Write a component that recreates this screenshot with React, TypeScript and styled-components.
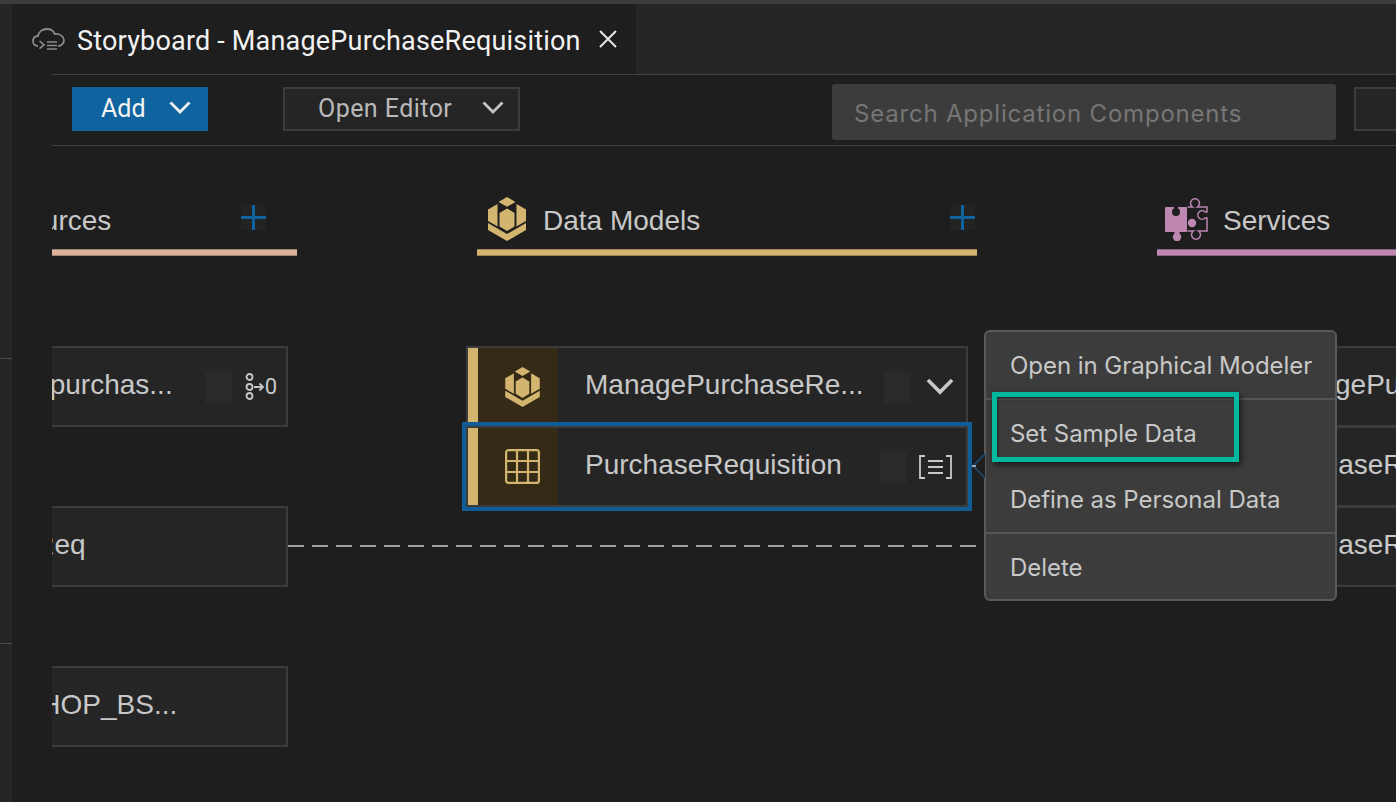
import React from 'react';
import styled, {createGlobalStyle} from 'styled-components';

const colors = {
  gold: '#d3b570',
  peach: '#dcb29b',
  mauve: '#bd87b1',
  blue: '#0f639e',
  line: '#3c3c3c',
  panel: '#252526',
  canvas: '#1e1e1e',
  text: '#c8c8c8',
};

const GlobalStyle = createGlobalStyle`
  html, body {
    margin: 0;
    height: 100%;
    background: ${colors.canvas};
    overflow: hidden;
  }
  * {
    box-sizing: border-box;
  }
`;

const Page = styled.div`
  width: 1396px;
  height: 802px;
  display: flex;
  flex-direction: column;
  overflow: hidden;
  font-family: 'Liberation Sans', Arial, sans-serif;
`;

const TopEdge = styled.div`
  height: 4px;
  flex-shrink: 0;
  background: #3c3c3c;
`;

const Body = styled.div`
  flex: 1;
  display: flex;
  min-height: 0;
`;

const Rail = styled.div`
  width: 12px;
  flex-shrink: 0;
  padding-top: 354px;
  background: ${colors.panel};
`;

const RailTick = styled.div`
  height: 1px;
  margin-bottom: 284px;
  background: #4a4a4a;
`;

const Main = styled.div`
  flex: 1;
  min-width: 0;
  display: flex;
  flex-direction: column;
`;

const TabStrip = styled.div`
  height: 70px;
  flex-shrink: 0;
  display: flex;
  background: ${colors.panel};
`;

const Tab = styled.div`
  width: 624px;
  display: flex;
  align-items: center;
  padding: 0 18px 0 20px;
  background: ${colors.canvas};
  color: #f2f2f2;
`;

const TabIcon = styled.div`
  display: flex;
  margin-top: 3px;
`;

const TabTitle = styled.span`
  flex: 1;
  margin: 3px 0 0 12px;
  font-family: Roboto, sans-serif;
  font-size: 27px;
  letter-spacing: 0.19px;
  white-space: nowrap;
`;

const Content = styled.div`
  flex: 1;
  min-height: 0;
  margin-left: 40px;
  display: flex;
  flex-direction: column;
`;

const Toolbar = styled.div`
  height: 72px;
  flex-shrink: 0;
  display: flex;
  align-items: flex-start;
  padding: 12px 0 0 20px;
  border-top: 1px solid #414141;
  border-bottom: 1px solid #414141;
  overflow: hidden;
`;

const AddButton = styled.div`
  width: 136px;
  height: 44px;
  flex-shrink: 0;
  display: flex;
  align-items: center;
  justify-content: space-between;
  padding: 0 17px 2px 29px;
  background: ${colors.blue};
  color: #f4f4f4;
  font-family: Roboto, sans-serif;
  font-size: 25px;
`;

const EditorSelect = styled.div`
  width: 237px;
  height: 44px;
  flex-shrink: 0;
  margin-left: 75px;
  display: flex;
  align-items: center;
  justify-content: space-between;
  padding: 0 14px 2px 33px;
  border: 2px solid ${colors.line};
  background: ${colors.panel};
  color: #b9b9b9;
  font-family: Roboto, sans-serif;
  font-size: 25px;
  letter-spacing: 0.45px;
`;

const SearchBox = styled.div`
  width: 504px;
  height: 56px;
  flex-shrink: 0;
  margin: -3px 0 0 312px;
  display: flex;
  align-items: center;
  padding: 2px 0 0 22px;
  border-radius: 3px;
  background: #3c3c3c;
  color: #767676;
  font-family: Inter, sans-serif;
  font-size: 24px;
  letter-spacing: 0.8px;
  white-space: nowrap;
`;

const CutOffBox = styled.div`
  width: 100px;
  height: 44px;
  flex-shrink: 0;
  margin-left: 18px;
  border: 2px solid ${colors.line};
  background: ${colors.panel};
`;

const Canvas = styled.div`
  position: relative;
  flex: 1;
  min-height: 0;
  overflow: hidden;
`;

const Track = styled.div`
  display: flex;
  gap: 180px;
  margin-left: -255px;
  padding-top: 48px;
`;

const Column = styled.div`
  width: 500px;
  flex-shrink: 0;
`;

const ColumnHead = styled.div`
  height: 55px;
  display: flex;
  align-items: center;
`;

const HeadIcon = styled.div`
  width: 60px;
  margin-top: -5px;
  display: flex;
  justify-content: center;
`;

const HeadTitle = styled.div<{$indent?: number}>`
  flex: 1;
  margin: -2px 0 0 ${({$indent}) => $indent ?? 6}px;
  color: ${colors.text};
  font-size: 28px;
  white-space: nowrap;
`;

const AddTile = styled.div<{$inset: number}>`
  width: 25px;
  height: 25px;
  margin: -8px ${({$inset}) => $inset}px 0 0;
  background: #232323;
`;

const Accent = styled.div<{$color: string}>`
  height: 7px;
  background: ${({$color}) => $color};
  border: 1px solid rgba(0, 0, 0, 0.25);
  border-width: 1px 0;
`;

const CardList = styled.div<{$spaced?: boolean}>`
  margin: 90px 0 0 -11px;
  width: 502px;
  display: flex;
  flex-direction: column;
  gap: ${({$spaced}) => ($spaced ? '79px' : '0')};
`;

const Card = styled.div<{$selected?: boolean; $spaced?: boolean}>`
  position: relative;
  height: 81px;
  margin-bottom: ${({$spaced}) => ($spaced ? '0' : '-1px')};
  display: flex;
  align-items: stretch;
  border: 2px solid ${colors.line};
  background: ${colors.panel};
  ${({$selected}) => $selected && `outline: 4px solid #0f5c96; z-index: 1;`}
`;

const Stripe = styled.div<{$color: string}>`
  width: 10px;
  flex-shrink: 0;
  background: ${({$color}) => $color};
`;

const CardIcon = styled.div`
  width: 80px;
  flex-shrink: 0;
  display: flex;
  align-items: center;
  justify-content: center;
  padding-left: 9px;
  background: #352a15;
`;

const CardLabel = styled.div`
  flex: 1;
  min-width: 0;
  display: flex;
  align-items: center;
  padding: 0 0 4px 27px;
  color: ${colors.text};
  font-size: 28px;
  white-space: nowrap;
`;

const CardTools = styled.div`
  display: flex;
  align-items: center;
  gap: 12px;
  padding-right: 12px;
`;

const ToolSquare = styled.div`
  width: 27px;
  height: 32px;
  background: #2a2a2a;
`;

const ChevronSlot = styled.div`
  display: flex;
  margin-left: 3px;
`;

const MappingCount = styled.div`
  display: flex;
  align-items: center;
  margin: 0 -3px 0 1px;
  color: ${colors.text};
  font-family: Roboto, sans-serif;
  font-size: 22px;
`;

const Connector = styled.div`
  position: absolute;
  left: 236px;
  top: 399px;
  width: 858px;
  height: 2px;
  background: repeating-linear-gradient(to right, #a0a0a0 0 16px, transparent 16px 24px);
`;

const Popover = styled.div`
  position: absolute;
  left: 932px;
  top: 184px;
  width: 353px;
  height: 271px;
  border: 2px solid #5a5a5a;
  border-radius: 6px;
  background: #3c3c3c;
  z-index: 2;
`;

const PopoverArrow = styled.svg`
  position: absolute;
  left: -14px;
  top: 121px;
`;

const MenuGroup = styled.div<{$last?: boolean}>`
  border-bottom: ${({$last}) => ($last ? 'none' : '2px solid #565656')};
`;

const MenuItem = styled.div`
  height: 66px;
  display: flex;
  align-items: center;
  padding-left: 24px;
  color: ${colors.text};
  font-family: Inter, sans-serif;
  font-size: 24px;
  letter-spacing: -0.05px;
  white-space: nowrap;
`;

const Callout = styled.div`
  position: absolute;
  left: 6px;
  top: 60px;
  width: 247px;
  height: 70px;
  border: 5px solid #00b9a0;
  box-shadow: 2px 3px 6px rgba(0, 0, 0, 0.6), inset 1px 2px 3px rgba(0, 0, 0, 0.45);
`;

const Chevron = ({size = 22, color = '#f0f0f0'}: {size?: number; color?: string}) => (
  <svg width={size} height={size * 0.6} viewBox="0 0 22 13" fill="none">
    <path d="M1.5 1.5 11 11l9.5-9.5" stroke={color} strokeWidth="2.8" />
  </svg>
);

const CloudIcon = ({color = '#8b8b8b'}: {color?: string}) => (
  <svg width="33" height="25" viewBox="0 0 33 25" fill="none" stroke={color} strokeWidth="1.8">
    <path d="M6 18C3 18 1 15.800 1 13c0-2.700 2-4.800 5-5C6.700 3.800 10.300 1 15 1c3.600 0 6.600 2 7.800 5 5.300-.4 9.200 2.600 9.200 6.300 0 3-2.800 5.700-5.800 5.700" />
    <path d="M7.500 13l4.500 3.800-4.500 3.800M15 14h10M15 17.500h10M15 21h10" strokeWidth="1.600" />
  </svg>
);

const CubeIcon = ({width, height}: {width: number; height: number}) => (
  <svg width={width} height={height} viewBox="0 0 38 44" fill={colors.gold}>
    <path d="M19 0l8.500 5-8.500 4.800L10.500 5z" />
    <path d="M19 11.500l7.500 4.500v13.500L19 34l-7.500-4.500V16z" />
    <path d="M9.500 7v8l.1 14.500L0 24V12.500z" />
    <path d="M28.500 7v8l-.1 14.500L38 24V12.500z" />
    <path d="M0 26l19 11 19-11v7L19 44 0 33z" />
  </svg>
);

const TableIcon = () => (
  <svg width="35" height="35" viewBox="0 0 35 35" fill="none" stroke={colors.gold} strokeWidth="2.2">
    <rect x="1.100" y="1.100" width="32.800" height="32.800" rx="2.500" />
    <path d="M12 1v33M23 1v33M1 12h33M1 23h33" />
  </svg>
);

const PuzzleIcon = () => (
  <svg width="44" height="44" viewBox="0 0 44 44">
    <g fill={colors.mauve}>
      <rect x="0" y="10" width="22" height="25" rx="1" />
      <circle cx="12" cy="40" r="4.200" />
      <rect x="9.500" y="34" width="5" height="3" />
      <circle cx="27" cy="26" r="4.200" />
    </g>
    <g fill={colors.canvas}>
      <circle cx="11" cy="15" r="4" />
      <rect x="9" y="9" width="4" height="4" />
    </g>
    <path
      fill="none"
      stroke={colors.mauve}
      strokeWidth="1.500"
      d="M22.500 10H27.500A4.500 4.500 0 1 1 32.500 10H42V15H40A4.200 4.200 0 1 0 40 21H42V34H33.500A4.500 4.500 0 1 1 28.500 34H22.500"
    />
  </svg>
);

const PlusIcon = () => (
  <svg width="25" height="25" viewBox="0 0 25 25" fill="none" stroke={colors.blue} strokeWidth="3">
    <path d="M12.500 0v25M0 12.500h25" />
  </svg>
);

const ListIcon = () => (
  <svg width="35" height="24" viewBox="0 0 35 24" fill="none" stroke={colors.text} strokeWidth="1.800">
    <path d="M6 1H1v22h5M27 1h5v22h-5M9 6h15M9 12h15M9 18h15" />
  </svg>
);

const MappingIcon = () => (
  <svg width="20" height="27" viewBox="0 0 20 27" fill="none" stroke={colors.text} strokeWidth="1.800">
    <circle cx="4.500" cy="4" r="3" />
    <circle cx="4.500" cy="14" r="3" />
    <circle cx="4.500" cy="23" r="3" />
    <path d="M9 14h9M14.500 10.500 18 14l-3.500 3.500" />
  </svg>
);

interface ModelCardProps {
  label: string;
  color: string;
  icon?: React.ReactNode;
  tool?: React.ReactNode;
  selected?: boolean;
  spaced?: boolean;
}

const ModelCard = ({label, color, icon, tool, selected, spaced}: ModelCardProps) => (
  <Card $selected={selected} $spaced={spaced}>
    <Stripe $color={color} />
    <CardIcon>{icon}</CardIcon>
    <CardLabel>{label}</CardLabel>
    {tool && (
      <CardTools>
        <ToolSquare />
        {tool}
      </CardTools>
    )}
  </Card>
);

const mapping = (
  <MappingCount>
    <MappingIcon />0
  </MappingCount>
);

export default function App() {
  return (
    <Page>
      <GlobalStyle />
      <TopEdge />
      <Body>
        <Rail>
          <RailTick />
          <RailTick />
        </Rail>
        <Main>
          <TabStrip>
            <Tab>
              <TabIcon>
                <CloudIcon />
              </TabIcon>
              <TabTitle>Storyboard - ManagePurchaseRequisition</TabTitle>
              <svg width="20" height="20" viewBox="0 0 20 20" stroke="#e8e8e8" strokeWidth="2">
                <path d="M2 2l16 16M18 2 2 18" />
              </svg>
            </Tab>
          </TabStrip>
          <Content>
            <Toolbar>
              <AddButton>
                Add
                <Chevron />
              </AddButton>
              <EditorSelect>
                Open Editor
                <Chevron color="#c4c4c4" />
              </EditorSelect>
              <SearchBox>Search Application Components</SearchBox>
              <CutOffBox />
            </Toolbar>
            <Canvas>
              <Track>
                <Column>
                  <ColumnHead>
                    <HeadIcon>
                      <CloudIcon color={colors.peach} />
                    </HeadIcon>
                    <HeadTitle $indent={10}>External Resources</HeadTitle>
                    <AddTile $inset={31}>
                      <PlusIcon />
                    </AddTile>
                  </ColumnHead>
                  <Accent $color={colors.peach} />
                  <CardList $spaced>
                    <ModelCard spaced color={colors.peach} label="cds_mgmt_purchas..." tool={mapping} />
                    <ModelCard spaced color={colors.peach} label="ManagePrReq" />
                    <ModelCard spaced color={colors.peach} label="J_WORKSHOP_BS..." />
                  </CardList>
                </Column>
                <Column>
                  <ColumnHead>
                    <HeadIcon>
                      <CubeIcon width={38} height={44} />
                    </HeadIcon>
                    <HeadTitle>Data Models</HeadTitle>
                    <AddTile $inset={2}>
                      <PlusIcon />
                    </AddTile>
                  </ColumnHead>
                  <Accent $color={colors.gold} />
                  <CardList>
                    <ModelCard
                      color={colors.gold}
                      label="ManagePurchaseRe..."
                      icon={<CubeIcon width={35} height={40} />}
                      tool={
                        <ChevronSlot>
                          <Chevron size={28} color={colors.text} />
                        </ChevronSlot>
                      }
                    />
                    <ModelCard
                      selected
                      color={colors.gold}
                      label="PurchaseRequisition"
                      icon={<TableIcon />}
                      tool={<ListIcon />}
                    />
                  </CardList>
                </Column>
                <Column>
                  <ColumnHead>
                    <HeadIcon>
                      <PuzzleIcon />
                    </HeadIcon>
                    <HeadTitle>Services</HeadTitle>
                  </ColumnHead>
                  <Accent $color={colors.mauve} />
                  <CardList>
                    <ModelCard color={colors.mauve} label="ManagePurchaseRe..." />
                    <ModelCard color={colors.mauve} label="PurchaseRequisition" />
                    <ModelCard color={colors.mauve} label="PurchaseRequisition" />
                  </CardList>
                </Column>
              </Track>
              <Connector />
              <Popover>
                <PopoverArrow width="14" height="26" viewBox="0 0 14 26" fill="none">
                  <path d="M13 1 1 13l12 12" fill="#1e1e1e" stroke="#174f7c" strokeWidth="1.500" />
                  <path d="M0 13h4" stroke="#d0d0d0" strokeWidth="1.500" />
                </PopoverArrow>
                <MenuGroup>
                  <MenuItem>Open in Graphical Modeler</MenuItem>
                </MenuGroup>
                <MenuGroup>
                  <MenuItem>Set Sample Data</MenuItem>
                  <MenuItem>Define as Personal Data</MenuItem>
                </MenuGroup>
                <MenuGroup $last>
                  <MenuItem>Delete</MenuItem>
                </MenuGroup>
                <Callout />
              </Popover>
            </Canvas>
          </Content>
        </Main>
      </Body>
    </Page>
  );
}
